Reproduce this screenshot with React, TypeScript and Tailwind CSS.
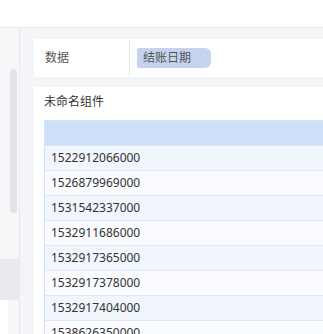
const rows = [
  "1522912066000",
  "1526879969000",
  "1531542337000",
  "1532911686000",
  "1532917365000",
  "1532917378000",
  "1532917404000",
  "1538626350000",
];

const font = { fontFamily: '"Noto Sans", "Noto Sans CJK SC", sans-serif' };

export default function App() {
  return (
    <div className="w-[323px] h-[334px] overflow-hidden flex flex-col bg-white text-[12px] leading-[16px]" style={font}>
      <div className="h-[28px] shrink-0 bg-white border-b border-[#e6e8eb]" />
      <div className="flex flex-1 min-h-0">
        <aside className="w-[20px] shrink-0 flex flex-col bg-[#f6f7f9] border-r border-[#e8e9ec]">
          <div className="mt-[41px] ml-[10px] w-[7px] h-[144px] rounded-full bg-[#e3e4e8]" />
          <div className="mt-[46px] h-[41px] bg-[#e9eaed]" />
          <div className="w-[8px] flex-1 bg-white" />
        </aside>
        <main className="flex-1 min-w-0 bg-[#f4f5f7] pl-[14px] pt-[11px]">
          <div className="h-[38px] bg-white flex items-center">
            <div className="w-[95px] pl-[11px] text-[#555]">数据</div>
            <div className="self-stretch my-[1px] w-px bg-[#e6e7ea]" />
            <div className="ml-[7px] h-[20px] w-[74px] flex items-center pl-[6px] bg-[#c5d3ef] text-[#555] rounded-l-[2px] rounded-r-[6px]">
              结账日期
            </div>
          </div>
          <div className="mt-[10px] bg-white pb-4">
            <div className="h-[29px] flex items-center pl-[10px] text-[#333]">未命名组件</div>
            <div className="ml-[10px] mt-[4px] border-l border-t border-[#d6e4f8]">
              <div className="h-[24px] bg-[#cde0fa]" />
              {rows.map((r, i) => (
                <div
                  key={r}
                  className={
                    "h-[25px] flex items-center pl-[6px] text-[#333] border-t border-[#dce8f8] " +
                    (i % 2 === 0 ? "bg-[#f1f6fd]" : "bg-[#f9fbff]")
                  }
                >
                  {r}
                </div>
              ))}
            </div>
          </div>
        </main>
      </div>
    </div>
  );
}
